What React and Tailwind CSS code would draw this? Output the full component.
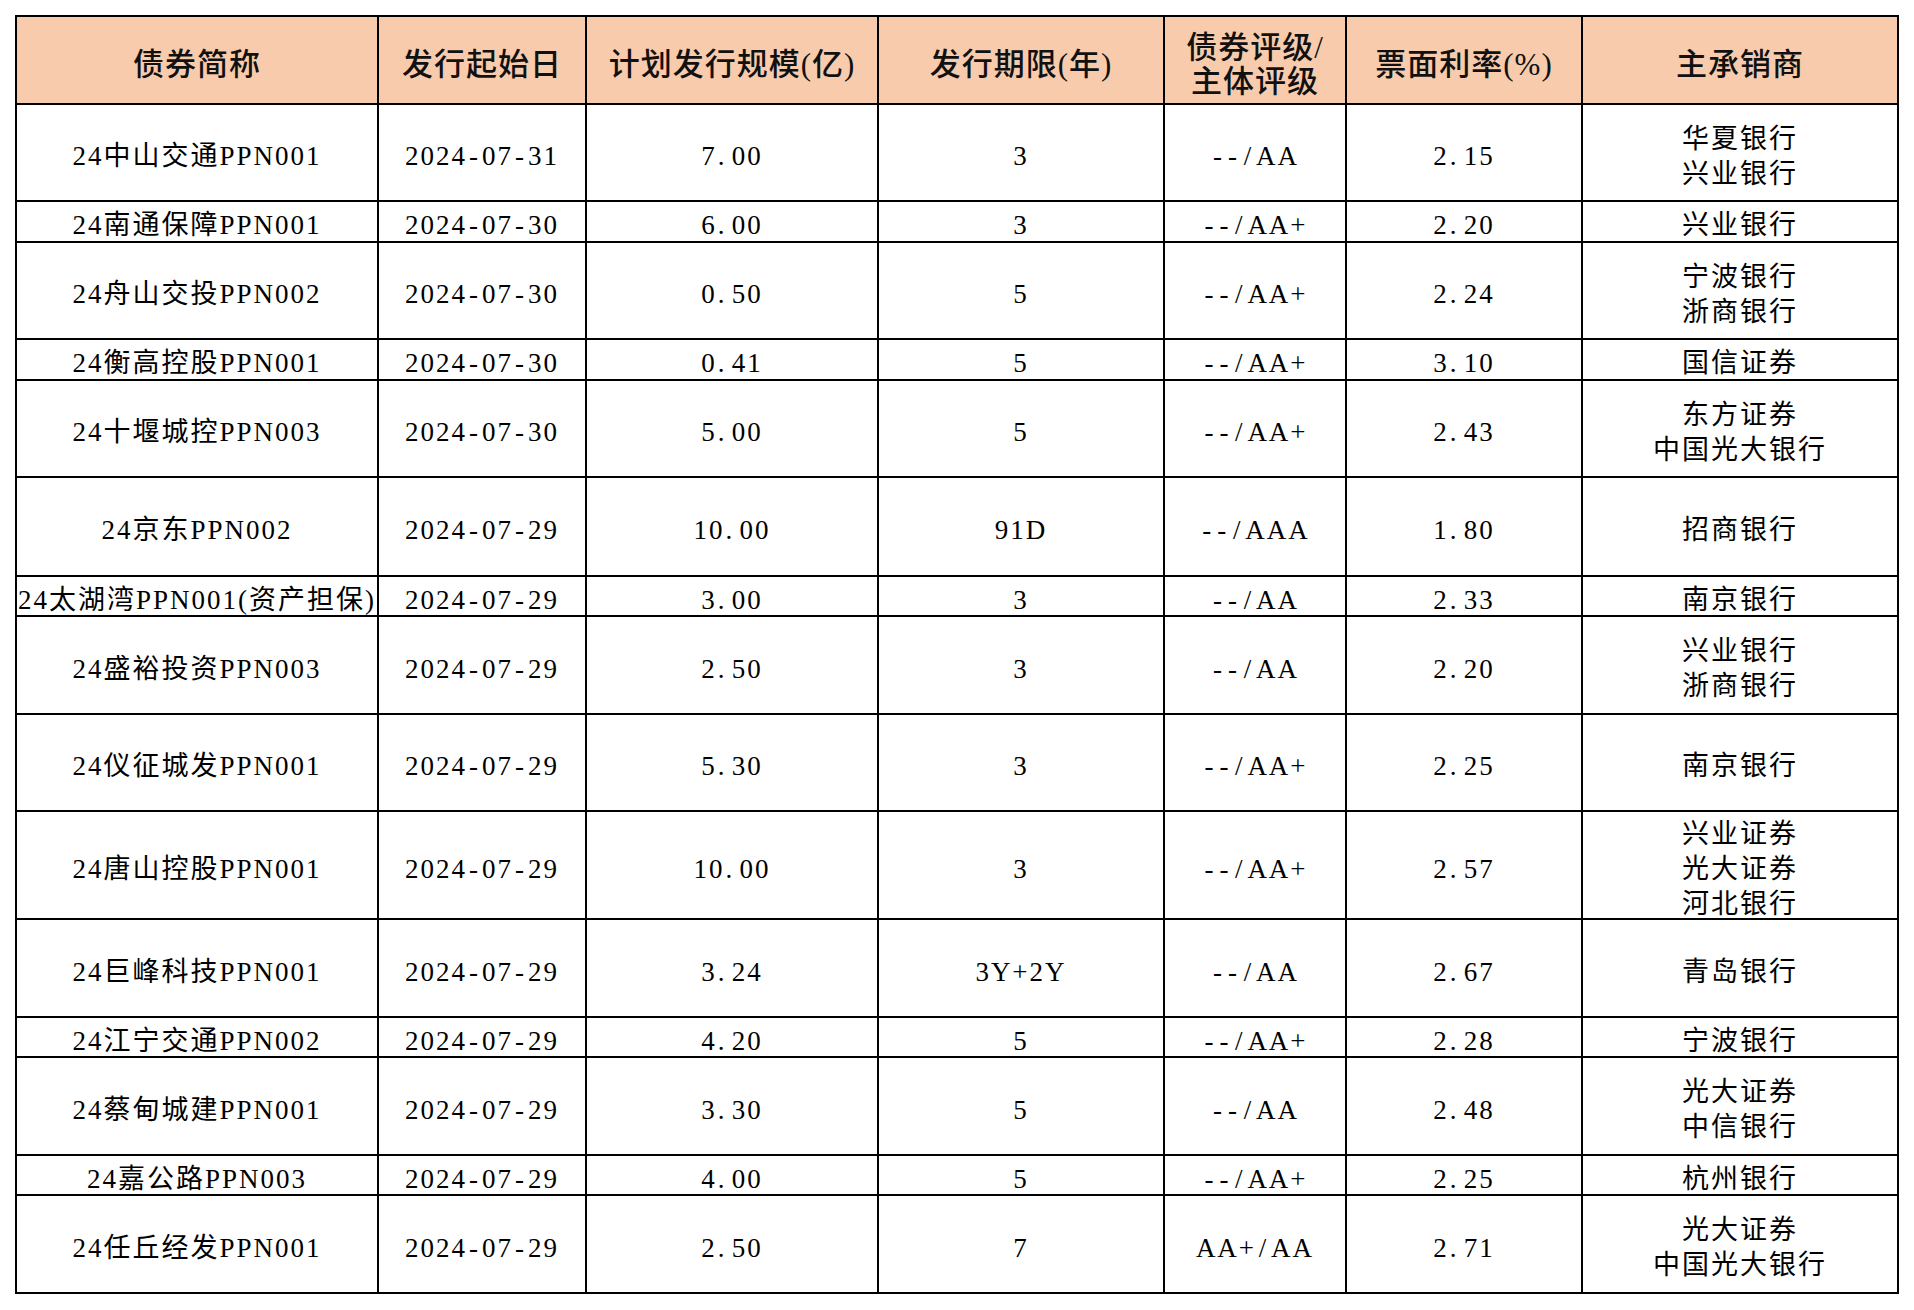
import React from "react";

const headers = [
  ["债券简称"],
  ["发行起始日"],
  ["计划发行规模(亿)"],
  ["发行期限(年)"],
  ["债券评级/", "主体评级"],
  ["票面利率(%)"],
  ["主承销商"],
];

// name, date, size, term, rating, coupon, underwriters
const rows = [
  ["24中山交通PPN001", "2024-07-31", "7.00", "3", "--/AA", "2.15", ["华夏银行", "兴业银行"]],
  ["24南通保障PPN001", "2024-07-30", "6.00", "3", "--/AA+", "2.20", ["兴业银行"]],
  ["24舟山交投PPN002", "2024-07-30", "0.50", "5", "--/AA+", "2.24", ["宁波银行", "浙商银行"]],
  ["24衡高控股PPN001", "2024-07-30", "0.41", "5", "--/AA+", "3.10", ["国信证券"]],
  ["24十堰城控PPN003", "2024-07-30", "5.00", "5", "--/AA+", "2.43", ["东方证券", "中国光大银行"]],
  ["24京东PPN002", "2024-07-29", "10.00", "91D", "--/AAA", "1.80", ["招商银行"]],
  ["24太湖湾PPN001(资产担保)", "2024-07-29", "3.00", "3", "--/AA", "2.33", ["南京银行"]],
  ["24盛裕投资PPN003", "2024-07-29", "2.50", "3", "--/AA", "2.20", ["兴业银行", "浙商银行"]],
  ["24仪征城发PPN001", "2024-07-29", "5.30", "3", "--/AA+", "2.25", ["南京银行"]],
  ["24唐山控股PPN001", "2024-07-29", "10.00", "3", "--/AA+", "2.57", ["兴业证券", "光大证券", "河北银行"]],
  ["24巨峰科技PPN001", "2024-07-29", "3.24", "3Y+2Y", "--/AA", "2.67", ["青岛银行"]],
  ["24江宁交通PPN002", "2024-07-29", "4.20", "5", "--/AA+", "2.28", ["宁波银行"]],
  ["24蔡甸城建PPN001", "2024-07-29", "3.30", "5", "--/AA", "2.48", ["光大证券", "中信银行"]],
  ["24嘉公路PPN003", "2024-07-29", "4.00", "5", "--/AA+", "2.25", ["杭州银行"]],
  ["24任丘经发PPN001", "2024-07-29", "2.50", "7", "AA+/AA", "2.71", ["光大证券", "中国光大银行"]],
];

// the sheet uses half-width punctuation as wide as a digit
const Text = ({ s }) =>
  s.split(/([-./])/).map((part, i) =>
    /^[-./]$/.test(part) ? (
      <span key={i} className={`inline-block w-[15px] ${part === "." ? "text-left pl-[1px]" : "text-center"}`}>
        {part}
      </span>
    ) : (
      part
    )
  );

const Cell = ({ lines, head }) => (
  <div
    className={`flex flex-col items-center justify-center whitespace-nowrap ${
      head
        ? "bg-[#f8cbad] text-[31px] leading-[34px] tracking-[1px] font-medium text-[#111] pt-[10px]"
        : "bg-white text-[27px] leading-[35px] tracking-[2px] text-black pt-[8px]"
    }`}
  >
    {lines.map((l, i) => (
      <span key={i}>{head ? l : <Text s={l} />}</span>
    ))}
  </div>
);

export default function App() {
  return (
    <div className="bg-white w-[1914px] h-[1310px] pt-[15px] pl-[15px] font-['Liberation_Serif','Noto_Sans_CJK_SC',serif]">
      <div className="grid w-[1884px] bg-black p-[2px] gap-[2px] grid-cols-[360px_206px_290px_284px_180px_234px_314px] grid-rows-[86px_95px_39px_95px_39px_95px_97px_38px_96px_95px_106px_96px_38px_96px_38px_96px]">
        {headers.map((h, i) => (
          <Cell key={"h" + i} lines={h} head />
        ))}
        {rows.map((r, ri) =>
          r.map((c, ci) => (
            <Cell key={ri + "-" + ci} lines={Array.isArray(c) ? c : [c]} />
          ))
        )}
      </div>
    </div>
  );
}
